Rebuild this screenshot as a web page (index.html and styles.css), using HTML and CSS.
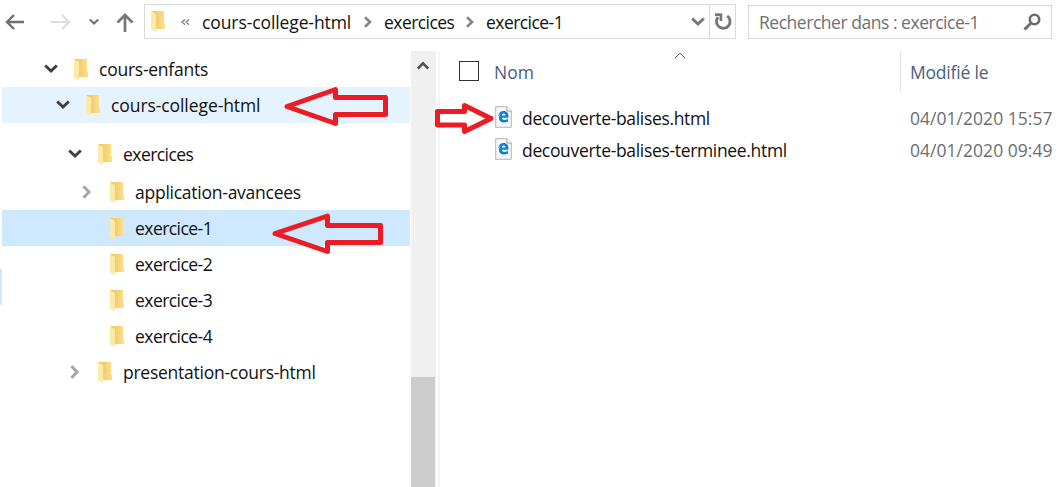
FILE: index.html
```html
<!DOCTYPE html>
<html lang="fr">
<head>
<meta charset="utf-8">
<title>exercice-1</title>
<link rel="stylesheet" href="styles.css">
</head>
<body>
<svg class="defs" aria-hidden="true">
  <defs>
    <linearGradient id="fold" x1="0" x2="1"><stop offset="0" stop-color="#e8c25e"/><stop offset="1" stop-color="#ffe08a"/></linearGradient>
    <symbol id="folder" viewBox="0 0 15 21"><path d="M0 0H13V12L14 13V18H0Z" fill="url(#fold)"/><path d="M0 0L5 3V21L0 18.500Z" fill="#ffe9a6"/></symbol>
    <symbol id="down" viewBox="0 0 14 10"><path d="M1.200 1.500L7 7L12.800 1.500" fill="none" stroke="currentColor" stroke-width="3"/></symbol>
    <symbol id="right" viewBox="0 0 10 14"><path d="M1.500 1.200L7 7L1.500 12.800" fill="none" stroke="currentColor" stroke-width="3"/></symbol>
    <symbol id="page" viewBox="0 0 17 22"><path d="M.7.7H12L16.300 5V21.300H.7Z" fill="#f7f7f7" stroke="#b5b5b5"/><path d="M12 .7V5H16.300" fill="#fff" stroke="#a5a5a5"/><path fill-rule="evenodd" d="M3.200 10.200C3.700 7 5.700 5.100 8.500 5.100C11.700 5.100 13.500 7.300 13.500 10.300V11.700H6.700C6.900 13.200 8 13.900 9.700 13.900C11 13.900 12 13.600 13 13.100V15.600C11.900 16.200 10.700 16.500 9 16.500C5.800 16.500 3.900 14.700 3.900 11.900C3.900 10.200 4.700 9 6 8.100C4.900 8.500 4 9.200 3.200 10.200ZM6.800 9.600H10.500C10.500 8.300 9.900 7.500 8.700 7.500C7.600 7.500 7 8.400 6.800 9.600Z" fill="#0f80d8"/></symbol>
  </defs>
</svg>
<header class="toolbar">
  <nav class="history">
    <svg class="back" width="20" height="16" viewBox="0 0 20 16"><path d="M19 8H2M9 1L2 8L9 15" fill="none" stroke="#707070" stroke-width="2.400"/></svg>
    <svg class="forward" width="20" height="16" viewBox="0 0 20 16"><path d="M0 8H18M11 1L18 8L11 15" fill="none" stroke="#dedede" stroke-width="2.200"/></svg>
    <svg class="recent" width="10" height="8" viewBox="0 0 10 8"><path d="M.8 1.500L5 5.500L9.200 1.500" fill="none" stroke="#777" stroke-width="2.200"/></svg>
    <svg class="up" width="18" height="19" viewBox="0 0 18 19"><path d="M9 19V2M1.500 9.500L9 2L16.500 9.500" fill="none" stroke="#777" stroke-width="2.700"/></svg>
  </nav>
  <div class="address">
    <svg class="folder"><use href="#folder"/></svg>
    <svg class="overflow" width="9" height="6" viewBox="0 0 9 6"><path d="M4 .3L1 3L4 5.700M8 .3L5 3L8 5.700" fill="none" stroke="#777" stroke-width="1.200"/></svg>
    <span class="crumb crumb-root">cours-college-html</span>
    <svg class="sep" viewBox="0 0 8 12"><path d="M1 1.200L6 6L1 10.800" fill="none" stroke="#858585" stroke-width="2.600"/></svg>
    <span class="crumb tight">exercices</span>
    <svg class="sep" viewBox="0 0 8 12"><path d="M1 1.200L6 6L1 10.800" fill="none" stroke="#858585" stroke-width="2.600"/></svg>
    <span class="crumb tight">exercice-1</span>
    <svg class="drop"><use href="#down"/></svg>
    <div class="refresh"><svg width="18" height="18" viewBox="0 0 18 18"><path d="M13.200 2.900A6.800 6.800 0 1 1 4 4.100" fill="none" stroke="#777" stroke-width="2.900"/><path d="M1 1.600H6.900V8" fill="none" stroke="#777" stroke-width="2.700"/></svg></div>
  </div>
  <div class="search">
    <span>Rechercher dans : exercice-1</span>
    <svg width="18" height="18" viewBox="0 0 18 18"><circle cx="11.500" cy="6.500" r="4.700" fill="none" stroke="#6d6d6d" stroke-width="2.600"/><path d="M8 10L1.500 16.500" stroke="#6d6d6d" stroke-width="3"/></svg>
  </div>
</header>
<main class="panes">
  <aside class="tree">
    <div class="row l0"><svg class="chev"><use href="#down"/></svg><svg class="folder"><use href="#folder"/></svg><span class="snug">cours-enfants</span></div>
    <div class="row l1 hover"><svg class="chev"><use href="#down"/></svg><svg class="folder"><use href="#folder"/></svg><span class="wide">cours-college-html</span></div>
    <div class="row l2 spaced"><svg class="chev"><use href="#down"/></svg><svg class="folder"><use href="#folder"/></svg><span class="tight">exercices</span></div>
    <div class="row l3"><svg class="chev closed"><use href="#right"/></svg><svg class="folder"><use href="#folder"/></svg><span class="snug">application-avancees</span></div>
    <div class="row l3 selected"><i class="chev"></i><svg class="folder"><use href="#folder"/></svg><span class="tight">exercice-1</span></div>
    <div class="row l3"><i class="chev"></i><svg class="folder"><use href="#folder"/></svg><span class="tight">exercice-2</span></div>
    <div class="row l3"><i class="chev"></i><svg class="folder"><use href="#folder"/></svg><span class="tight">exercice-3</span></div>
    <div class="row l3"><i class="chev"></i><svg class="folder"><use href="#folder"/></svg><span class="tight">exercice-4</span></div>
    <div class="row l2"><svg class="chev closed"><use href="#right"/></svg><svg class="folder"><use href="#folder"/></svg><span class="snug">presentation-cours-html</span></div>
    <i class="edge"></i>
  </aside>
  <div class="scrollbar"><svg width="12" height="9" viewBox="0 0 12 9"><path d="M.8 7.500L6 2.300L11.200 7.500" fill="none" stroke="#505050" stroke-width="2.500"/></svg><div class="thumb"></div></div>
  <section class="files">
    <div class="heading">
      <div class="name"><i class="check"></i><span>Nom</span><svg class="sort" width="12" height="7" viewBox="0 0 12 7"><path d="M.7 6.300L6 1L11.300 6.300" fill="none" stroke="#666"/></svg></div>
      <div class="date">Modifié le</div>
    </div>
    <div class="file"><div class="name"><svg class="page"><use href="#page"/></svg><span>decouverte-balises.html</span></div><div class="date">04/01/2020 15:57</div></div>
    <div class="file"><div class="name"><svg class="page"><use href="#page"/></svg><span>decouverte-balises-terminee.html</span></div><div class="date">04/01/2020 09:49</div></div>
  </section>
</main>
<svg class="marks" width="1060" height="487" viewBox="0 0 1060 487" fill="none" stroke="#ed1c24" stroke-width="5" stroke-linejoin="round">
  <path d="M287 106.500L335.500 89.500V97.500H385.500V114.500H335.500V123.500Z"/>
  <path d="M275 233.500L327.500 216V225.500H380.500V242.500H327.500V251.500Z"/>
  <path d="M437.500 111.500H464.500V105.500L491 118.500L464.500 131.500V125H437.500Z"/>
</svg>
</body>
</html>
```
FILE: styles.css
```css
* { box-sizing: border-box; }
body { margin: 0; width: 1060px; height: 487px; overflow: hidden; background: #fff; color: #111; font: 17.5px/24px "Open Sans", "Noto Sans", sans-serif; letter-spacing: -0.2px; white-space: nowrap; }
svg { display: block; flex: none; }
.defs { position: absolute; width: 0; height: 0; }
.toolbar { display: flex; height: 51px; padding-top: 4px; }
.history { display: flex; align-items: center; width: 144px; height: 36px; padding-left: 5px; }
.forward { margin-left: 26px; }
.recent { margin-left: 18px; }
.up { margin-left: 17px; }
.address { display: flex; align-items: center; width: 592px; height: 35px; padding-left: 6px; border: 1px solid #d9d9d9; }
.folder { width: 15px; height: 21px; flex: none; }
.overflow { margin-left: 15px; }
.crumb { width: 69px; }
.crumb-root { width: 149px; margin-left: 12px; letter-spacing: -0.1px; }
.tight { letter-spacing: -0.55px; }
.snug { letter-spacing: -0.25px; }
.wide { letter-spacing: -0.08px; }
.sep { width: 8px; height: 12px; margin: 0 12px 0 13px; }
.address .drop { width: 14px; height: 10px; margin-left: auto; color: #777; }
.refresh { display: grid; place-items: center; width: 26px; height: 33px; margin-left: 4px; border-left: 1px solid #d9d9d9; }
.search { display: flex; align-items: center; justify-content: space-between; width: 304px; height: 34px; margin: 1px 0 0 12px; padding: 0 10px; border: 1px solid #d9d9d9; color: #707070; letter-spacing: -0.47px; }
.panes { display: flex; height: 436px; }
.tree { position: relative; width: 411px; }
.row { display: flex; align-items: center; height: 36px; margin: 0 1px 0 2px; }
.row span { margin-left: 10px; }
.l0 { padding-left: 42px; }
.l1 { padding-left: 54px; }
.l2 { padding-left: 66px; }
.l3 { padding-left: 78px; }
.spaced { margin-top: 13px; margin-bottom: 2px; }
.hover { background: #e5f3ff; }
.selected { background: #cde8ff; }
.chev { width: 14px; height: 10px; margin-right: 16px; color: #404040; }
.chev.closed { width: 10px; height: 14px; margin: 0 18px 0 2px; color: #a6a6a6; }
.edge { position: absolute; left: 0; top: 218px; width: 2px; height: 36px; background: #cde8ff; }
.scrollbar { display: flex; flex-direction: column; justify-content: space-between; width: 25px; height: 436px; padding-top: 10px; background: #f0f0f0; }
.scrollbar svg { margin-left: 6px; }
.thumb { width: 24px; height: 110px; background: #cdcdcd; }
.files { flex: 1; margin-left: 2px; border-left: 2px solid #f5f5f5; }
.heading, .file { display: flex; }
.heading { height: 51px; color: #4c607a; }
.heading .name { position: relative; display: flex; align-items: center; width: 460px; height: 42px; padding-left: 19px; letter-spacing: 0; }
.check { width: 20px; height: 20px; margin: -2px 15px 0 0; border: 1px solid #333; }
.sort { position: absolute; left: 234px; top: 1px; }
.heading .date { height: 41px; padding: 9px 0 0 9px; border-left: 1px solid #e2e2e2; }
.file { height: 32px; align-items: center; }
.file .name { display: flex; align-items: center; width: 460px; padding-left: 55px; color: #111; letter-spacing: -0.33px; }
.page { width: 17px; height: 22px; margin: -2px 10px 0 0; }
.file .date { padding-left: 10px; color: #6d6d6d; letter-spacing: 0.03px; }
.marks { position: absolute; left: 0; top: 0; pointer-events: none; }
```
